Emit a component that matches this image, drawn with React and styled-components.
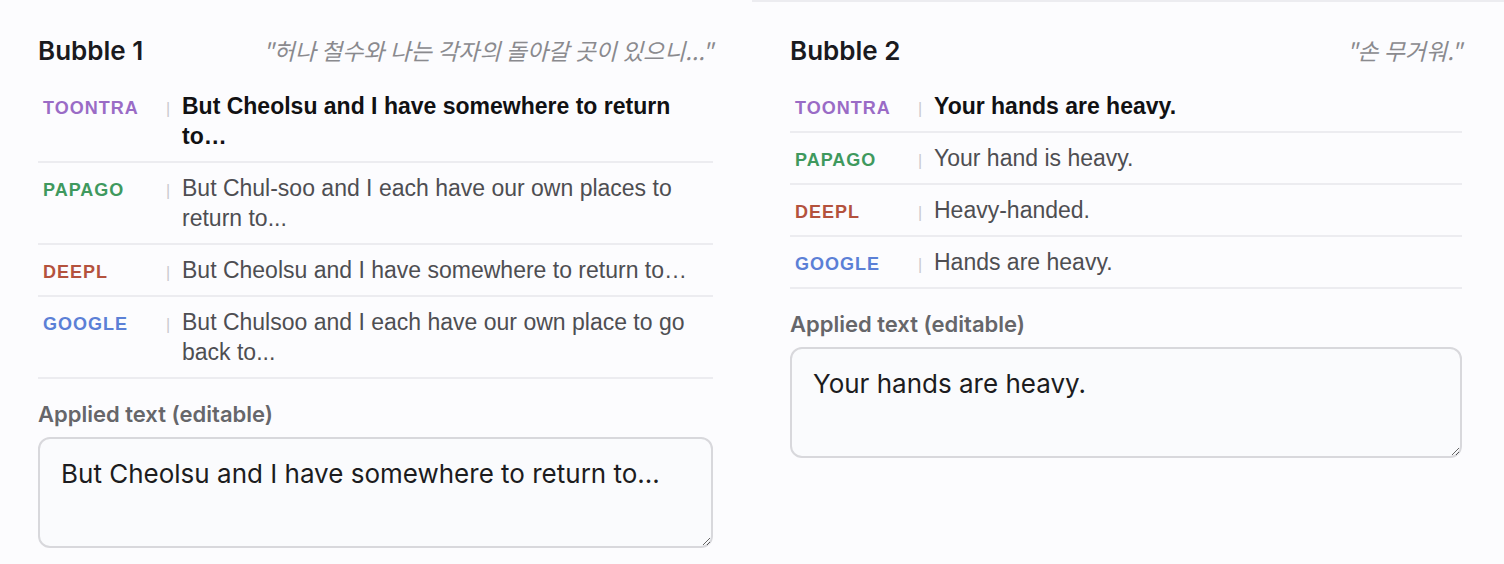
import React, { useState } from 'react';
import styled, { createGlobalStyle } from 'styled-components';

const GlobalStyle = createGlobalStyle`
  html, body {
    margin: 0;
    padding: 0;
    background: #fcfcfe;
  }
  body {
    font-family: Inter, 'Noto Sans', sans-serif;
  }
`;

const engines = {
  toontra: { name: 'TOONTRA', color: '#9a6bc6' },
  papago: { name: 'PAPAGO', color: '#3f995e' },
  deepl: { name: 'DEEPL', color: '#b4523d' },
  google: { name: 'GOOGLE', color: '#5b80d6' },
};

const bubbles = [
  {
    id: 1,
    source: '"허나 철수와 나는 각자의 돌아갈 곳이 있으니..."',
    results: {
      toontra: 'But Cheolsu and I have somewhere to return to…',
      papago: 'But Chul-soo and I each have our own places to return to...',
      deepl: 'But Cheolsu and I have somewhere to return to…',
      google: 'But Chulsoo and I each have our own place to go back to...',
    },
    applied: 'But Cheolsu and I have somewhere to return to...',
  },
  {
    id: 2,
    source: '"손 무거워."',
    results: {
      toontra: 'Your hands are heavy.',
      papago: 'Your hand is heavy.',
      deepl: 'Heavy-handed.',
      google: 'Hands are heavy.',
    },
    applied: 'Your hands are heavy.',
  },
];

const Grid = styled.div`
  display: grid;
  grid-template-columns: 752px 752px;
`;

const Column = styled.section`
  padding: 30px ${p => (p.$ruled ? '42px' : '39px')} 0 38px;
  border-top: ${p => (p.$ruled ? '2px solid #ececf0' : '2px solid transparent')};
`;

const Header = styled.div`
  display: flex;
  justify-content: space-between;
  align-items: center;
  height: 36px;
  margin-bottom: 13px;
`;

const Title = styled.h2`
  margin: 0;
  font-family: Inter, sans-serif;
  font-size: 26px;
  font-weight: 600;
  color: #1a1a1e;
`;

const Source = styled.span`
  font-family: 'Noto Sans CJK KR', 'Noto Sans', sans-serif;
  font-style: italic;
  font-size: 23px;
  color: #8a8a8e;
`;

const Row = styled.div`
  display: flex;
  align-items: baseline;
  padding: 10px 0 10px 5px;
  border-bottom: 2px solid #ececf0;
`;

const Label = styled.span`
  flex: 0 0 123px;
  font-family: 'Liberation Sans', Arial, sans-serif;
  font-weight: 700;
  font-size: 18px;
  letter-spacing: 1px;
  color: ${p => p.$color};
`;

const Sep = styled.span`
  flex: 0 0 16px;
  font-family: 'Liberation Sans', Arial, sans-serif;
  font-size: 16px;
  color: #c9c9cd;
`;

const Text = styled.span`
  flex: 1;
  font-family: 'Liberation Sans', Arial, sans-serif;
  font-size: 23px;
  line-height: 30px;
  color: ${p => (p.$main ? '#111113' : '#4e4e52')};
  font-weight: ${p => (p.$main ? 700 : 400)};
`;

const AppliedLabel = styled.div`
  margin-top: 22px;
  margin-bottom: 10px;
  font-family: Inter, sans-serif;
  font-size: 22px;
  line-height: 26px;
  font-weight: 600;
  color: #66666a;
`;

const Editor = styled.textarea`
  display: block;
  box-sizing: border-box;
  width: 100%;
  height: 111px;
  padding: 18px 21px;
  border: 2px solid #d8d8dc;
  border-radius: 12px;
  background: #fafbfd;
  font-family: Inter, sans-serif;
  font-size: 26px;
  line-height: 34px;
  color: #1c1c20;
  resize: vertical;
  outline: none;
`;

function Bubble({ bubble, ruled }) {
  const [value, setValue] = useState(bubble.applied);
  return (
    <Column $ruled={ruled}>
      <Header>
        <Title>Bubble {bubble.id}</Title>
        <Source>{bubble.source}</Source>
      </Header>
      {Object.keys(engines).map(key => (
        <Row key={key}>
          <Label $color={engines[key].color}>{engines[key].name}</Label>
          <Sep>|</Sep>
          <Text $main={key === 'toontra'}>{bubble.results[key]}</Text>
        </Row>
      ))}
      <AppliedLabel>Applied text (editable)</AppliedLabel>
      <Editor value={value} onChange={e => setValue(e.target.value)} />
    </Column>
  );
}

export default function App() {
  return (
    <>
      <GlobalStyle />
      <Grid>
        {bubbles.map((b, i) => (
          <Bubble key={b.id} bubble={b} ruled={i === 1} />
        ))}
      </Grid>
    </>
  );
}
